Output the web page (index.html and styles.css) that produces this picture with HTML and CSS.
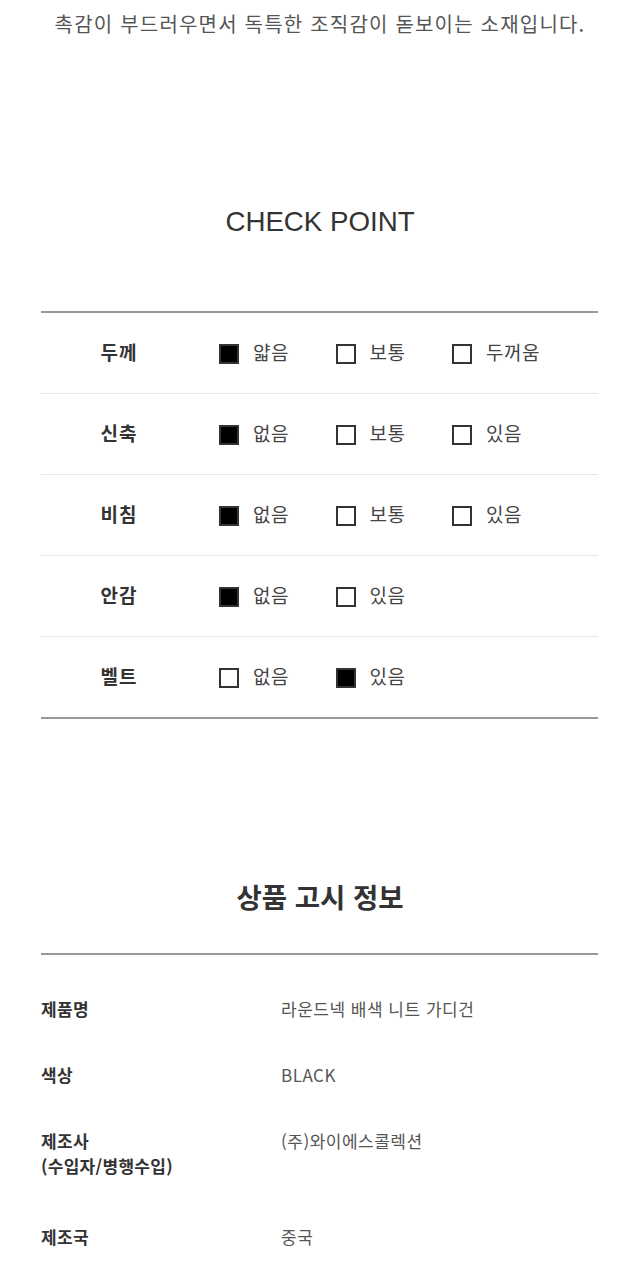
FILE: index.html
```html
<!DOCTYPE html>
<html lang="ko">
<head>
<meta charset="utf-8">
<link rel="stylesheet" href="styles.css">
</head>
<body>
<p class="intro">촉감이 부드러우면서 독특한 조직감이 돋보이는 소재입니다.</p>

<h2 class="cp-title">CHECK POINT</h2>

<div class="cp-table">
  <div class="cp-row">
    <div class="cp-label">두께</div>
    <div class="cp-opts">
      <div class="opt"><span class="box on"></span>얇음</div>
      <div class="opt"><span class="box"></span>보통</div>
      <div class="opt"><span class="box"></span>두꺼움</div>
    </div>
  </div>
  <div class="cp-row">
    <div class="cp-label">신축</div>
    <div class="cp-opts">
      <div class="opt"><span class="box on"></span>없음</div>
      <div class="opt"><span class="box"></span>보통</div>
      <div class="opt"><span class="box"></span>있음</div>
    </div>
  </div>
  <div class="cp-row">
    <div class="cp-label">비침</div>
    <div class="cp-opts">
      <div class="opt"><span class="box on"></span>없음</div>
      <div class="opt"><span class="box"></span>보통</div>
      <div class="opt"><span class="box"></span>있음</div>
    </div>
  </div>
  <div class="cp-row">
    <div class="cp-label">안감</div>
    <div class="cp-opts">
      <div class="opt"><span class="box on"></span>없음</div>
      <div class="opt"><span class="box"></span>있음</div>
    </div>
  </div>
  <div class="cp-row">
    <div class="cp-label">벨트</div>
    <div class="cp-opts">
      <div class="opt"><span class="box"></span>없음</div>
      <div class="opt"><span class="box on"></span>있음</div>
    </div>
  </div>
</div>

<h2 class="info-title">상품 고시 정보</h2>

<div class="info-table">
  <div class="info-row">
    <div class="info-label">제품명</div>
    <div class="info-value">라운드넥 배색 니트 가디건</div>
  </div>
  <div class="info-row">
    <div class="info-label">색상</div>
    <div class="info-value">BLACK</div>
  </div>
  <div class="info-row tall">
    <div class="info-label">제조사<br>(수입자/병행수입)</div>
    <div class="info-value">(주)와이에스콜렉션</div>
  </div>
  <div class="info-row">
    <div class="info-label">제조국</div>
    <div class="info-value">중국</div>
  </div>
</div>
</body>
</html>
```

FILE: styles.css
```css
html, body {
  margin: 0;
  padding: 0;
  background: #ffffff;
}
body {
  font-family: "Noto Sans CJK KR", "Noto Sans", sans-serif;
  color: #333;
}
.intro {
  margin: 0;
  padding-top: 9px;
  font-size: 20px;
  letter-spacing: 1.2px;
  line-height: 30px;
  text-align: center;
  color: #555;
}
.cp-title {
  margin: 165px 0 0;
  font-family: "Liberation Sans", "Noto Sans CJK KR", sans-serif;
  font-weight: 400;
  font-size: 27.7px;
  line-height: 36px;
  text-align: center;
  color: #333;
}
.cp-table {
  margin: 71px 42px 0 41px;
  border-top: 2px solid #999;
  border-bottom: 2px solid #999;
}
.cp-row {
  display: flex;
  align-items: center;
  height: 80px;
  border-bottom: 1px solid #e6e6e6;
}
.cp-row:last-child {
  border-bottom: none;
}
.cp-label {
  width: 156px;
  text-align: center;
  font-size: 19px;
  letter-spacing: 1px;
  font-weight: 700;
  color: #333;
  padding-bottom: 4px;
}
.cp-opts {
  display: flex;
  padding-left: 22px;
}
.opt {
  display: flex;
  align-items: center;
  width: 116.5px;
  font-size: 19px;
  letter-spacing: 0.5px;
  line-height: 24px;
  padding-bottom: 3px;
  color: #444;
}
.box {
  box-sizing: border-box;
  width: 20px;
  height: 20px;
  border: 2px solid #333;
  margin-right: 14px;
  margin-top: 5px;
  background: #fff;
}
.box.on {
  background: #000;
}
.info-title {
  margin: 159px 0 0;
  font-size: 27.5px;
  font-weight: 700;
  line-height: 36px;
  text-align: center;
  color: #333;
}
.info-table {
  margin: 39px 42px 0 41px;
  border-top: 2px solid #999;
  padding-top: 41px;
}
.info-row {
  display: flex;
  padding: 20.5px 0;
  font-size: 17px;
  line-height: 25px;
}
.info-row:first-child {
  padding-top: 0;
}
.info-row.tall {
  padding-bottom: 25.5px;
}
.info-label {
  width: 240px;
  font-weight: 700;
  letter-spacing: 0.3px;
  color: #333;
}
.info-value {
  color: #555;
  letter-spacing: 0.5px;
}
```
